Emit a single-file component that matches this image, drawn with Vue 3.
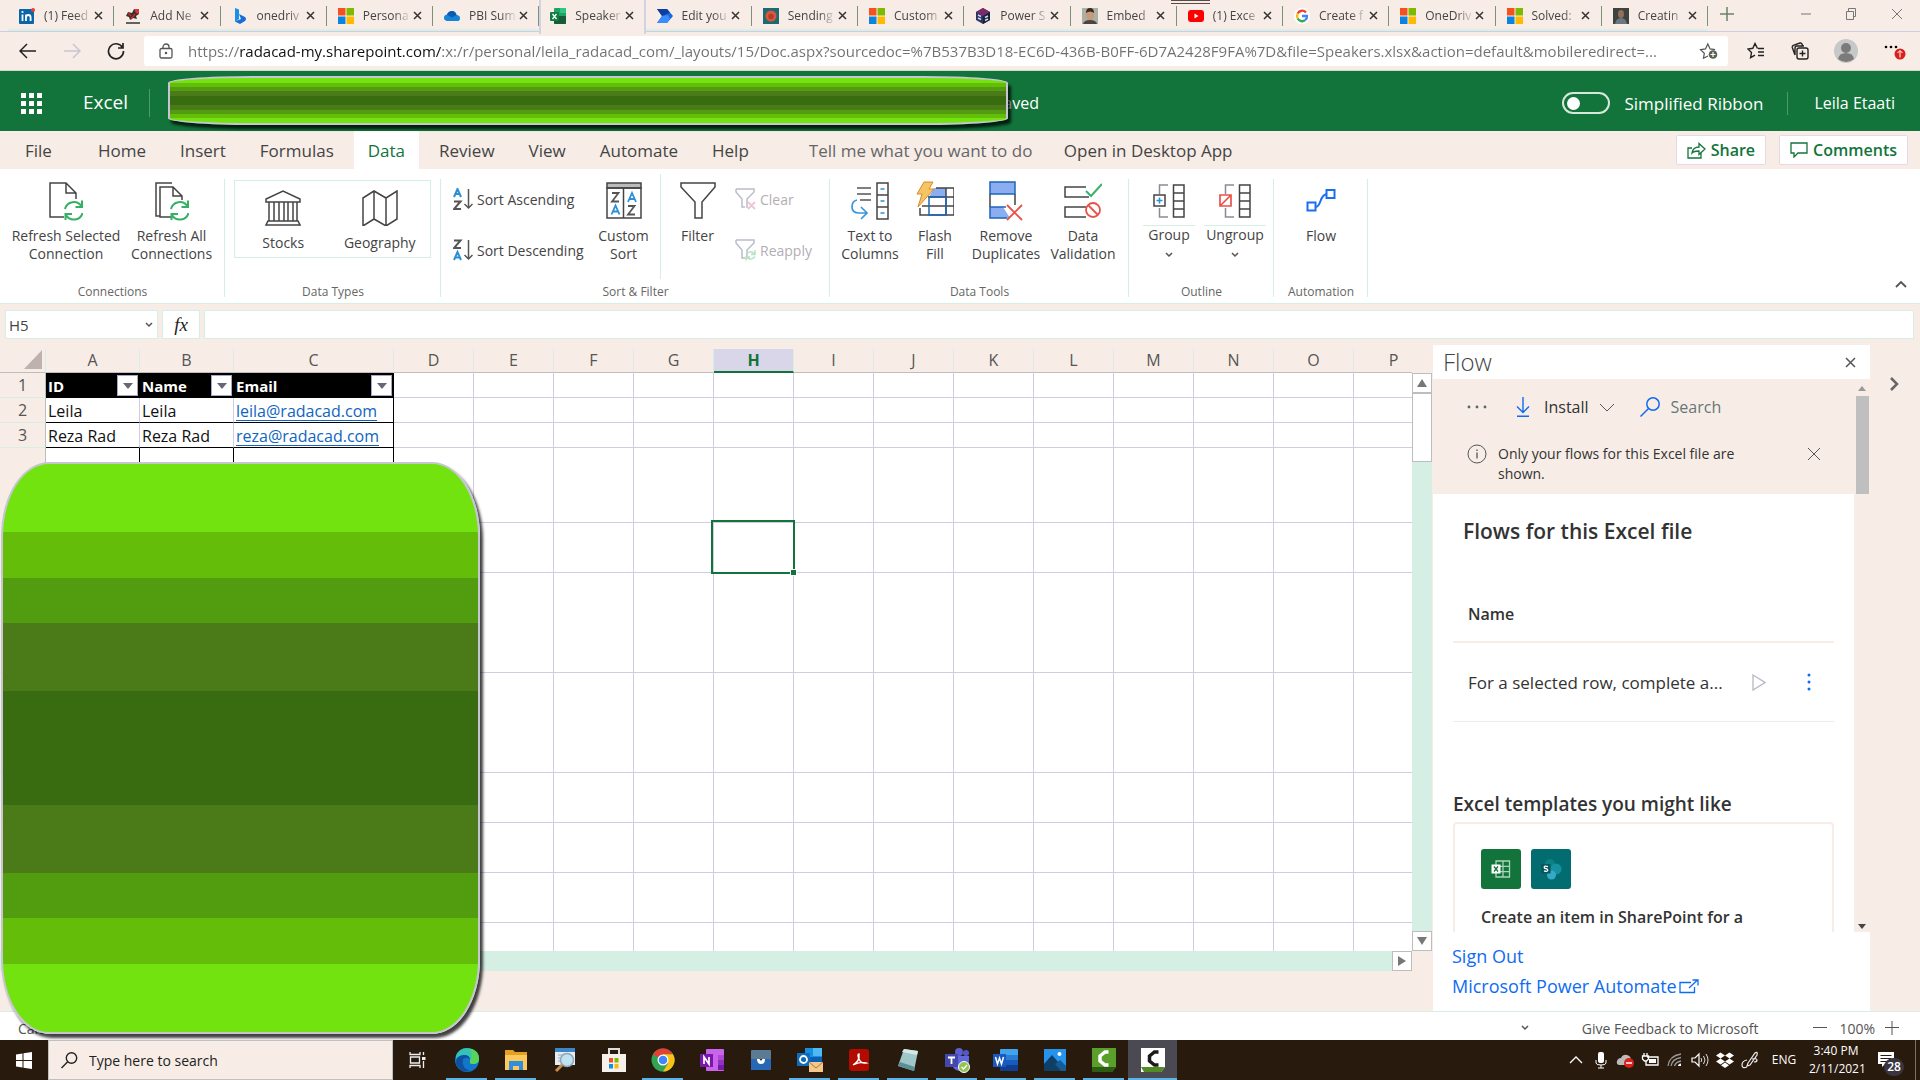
<template>
  <div class="screen">
    <!-- Browser tabs -->
    <div class="tab-strip">
      <div class="tabs">
        <div v-for="tab in tabs" :key="tab.title" class="tab" :class="{ active: tab.active }">
          <svg class="favicon" viewBox="0 0 16 16" v-html="favicons[tab.icon]"></svg>
          <span class="tab-title">{{ tab.title }}</span>
          <button class="tab-close" :aria-label="'Close ' + tab.title">
            <svg width="9" height="9" viewBox="0 0 9 9"><path d="M1 1l7 7M8 1l-7 7" stroke="#333" stroke-width="1.5" /></svg>
          </button>
        </div>
      </div>
      <div class="share-handle"></div>
      <div class="window-controls">
        <button aria-label="New tab"><svg width="14" height="14" viewBox="0 0 14 14"><path d="M7 0v14M0 7h14" stroke="#6b8068" stroke-width="1.5" /></svg></button>
        <span class="spacer"></span>
        <button aria-label="Minimize"><svg width="10" height="12" viewBox="0 0 10 12"><path d="M0 6h10" stroke="#777" /></svg></button>
        <button aria-label="Restore"><svg width="12" height="12" viewBox="0 0 12 12" fill="none" stroke="#777"><path d="M1.500 3.500h7v8h-7zM3.500 3V.5h7v8H9" /></svg></button>
        <button aria-label="Close window"><svg width="12" height="12" viewBox="0 0 12 12"><path d="M1 1l10 10M11 1L1 11" stroke="#777" /></svg></button>
      </div>
    </div>

    <!-- Address bar -->
    <div class="toolbar">
      <div class="nav-buttons">
        <button aria-label="Back"><svg width="18" height="16" viewBox="0 0 18 16" fill="none" stroke="#222" stroke-width="1.500"><path d="M17 8H1M8 1L1 8l7 7" /></svg></button>
        <button aria-label="Forward"><svg width="18" height="16" viewBox="0 0 18 16" fill="none" stroke="#c9c5d2" stroke-width="1.500"><path d="M1 8h16M10 1l7 7-7 7" /></svg></button>
        <button aria-label="Refresh"><svg width="18" height="18" viewBox="0 0 18 18" fill="none" stroke="#222" stroke-width="1.700"><path d="M15.500 5.500A7.500 7.500 0 1 0 16.500 9M16 1v5h-5" /></svg></button>
      </div>
      <div class="address">
        <svg width="14" height="16" viewBox="0 0 14 16" fill="none" stroke="#555" stroke-width="1.300"><rect x="1" y="5.500" width="12" height="9.500" rx="1.500" /><path d="M4 5.500V4a3 3 0 0 1 6 0v1.500" /><circle cx="7" cy="10" r=".6" fill="#555" /></svg>
        <input v-model="url" class="url" type="text" aria-label="Address" />
        <button aria-label="Add to favorites"><svg width="19" height="18" viewBox="0 0 19 18" fill="none" stroke="#555" stroke-width="1.200"><path d="M9 14l-4.500 2.300.8-5L1.500 7.700l5-.8L8.800 2l2.300 4.900 5 .8" /><circle cx="14" cy="12.500" r="4.300" fill="#56614f" stroke="none" /><path d="M14 10v5M11.500 12.500h5" stroke="#fff" /></svg></button>
      </div>
      <div class="toolbar-actions">
        <button aria-label="Favorites"><svg width="18" height="18" viewBox="0 0 18 18" fill="none" stroke="#222" stroke-width="1.400"><path d="M10.500 6.500L8 1.500 5.800 6.300.9 7l3.600 3.500-.9 5.200L8 13.200M11 6.500h6M11 10h6M11 13.500h6" /></svg></button>
        <button aria-label="Collections"><svg width="18" height="18" viewBox="0 0 18 18" fill="none" stroke="#222" stroke-width="1.400"><rect x="6" y="6" width="11" height="11" rx="2" /><path d="M11.500 8.500v6M8.500 11.500h6M4 13L1.300 5.500Q1 4 2.300 3.300L9 1q1.500-.3 2 1l.5 1.500M4 13V6q0-2 2-2h7" /></svg></button>
        <button aria-label="Profile"><svg width="24" height="24" viewBox="0 0 24 24"><circle cx="12" cy="12" r="12" fill="#c6c9c8" /><circle cx="12" cy="9" r="5" fill="#7b7b7b" /><path d="M4 20q1-6 8-6t8 6q-8 6-16 0z" fill="#7b7b7b" /></svg></button>
        <button aria-label="Settings and more"><svg width="22" height="20" viewBox="0 0 22 20"><circle cx="2" cy="6" r="1.300" /><circle cx="7" cy="6" r="1.300" /><circle cx="12" cy="6" r="1.300" /><circle cx="16" cy="13" r="5.500" fill="#d9201d" /><path d="M16 16.500v-6.500M13.500 12l2.500-2.500 2.500 2.500" stroke="#fff" fill="none" /></svg></button>
      </div>
    </div>

    <!-- Excel header -->
    <header class="app-header">
      <button class="waffle" aria-label="App launcher"><i v-for="n in 9" :key="n"></i></button>
      <span class="app-name">Excel</span>
      <div class="document">
        <span class="saved">Saved</span>
        <div class="cover cover-title"></div>
      </div>
      <label class="ribbon-toggle">
        <input type="checkbox" />
        <span>Simplified Ribbon</span>
      </label>
      <span class="user">Leila Etaati</span>
    </header>

    <!-- Ribbon tabs -->
    <nav class="menu">
      <button v-for="item in menu" :key="item" :class="{ active: item === 'Data', file: item === 'File' }">{{ item }}</button>
      <input class="tell-me" type="text" placeholder="Tell me what you want to do" aria-label="Tell me what you want to do" />
      <button>Open in Desktop App</button>
      <span class="spacer"></span>
      <button class="outlined"><svg width="19" height="18" viewBox="0 0 19 18" fill="none" stroke="#12743b" stroke-width="1.300"><path d="M5 7H1v10h13v-5M5 12q1-6 7-6V2.500L18 8l-6 5.500V10q-5 0-7 2z" /></svg>Share</button>
      <button class="outlined"><svg width="18" height="16" viewBox="0 0 18 16" fill="none" stroke="#12743b" stroke-width="1.300"><path d="M1 1h16v10H8l-4 4v-4H1z" /></svg>Comments</button>
    </nav>

    <!-- Ribbon -->
    <section class="ribbon">
      <div class="group connections">
        <div class="group-body">
          <button class="big w-selected"><svg class="ico" width="34" height="38" viewBox="0 0 34 38" v-html="icons.refreshOne"></svg><span>Refresh Selected<br />Connection</span></button>
          <button class="big w-all"><svg class="ico" width="34" height="38" viewBox="0 0 34 38" v-html="icons.refreshAll"></svg><span>Refresh All<br />Connections</span></button>
        </div>
        <div class="group-name">Connections</div>
      </div>
      <div class="group data-types">
        <div class="group-body">
          <div class="gallery">
            <button><svg width="36" height="36" viewBox="0 0 36 36" v-html="icons.stocks"></svg><span>Stocks</span></button>
            <button><svg width="36" height="36" viewBox="0 0 36 36" v-html="icons.geography"></svg><span>Geography</span></button>
          </div>
        </div>
        <div class="group-name">Data Types</div>
      </div>
      <div class="group sort-filter">
        <div class="group-body">
          <div class="stack w-sort">
            <button><svg width="20" height="22" viewBox="0 0 20 22" v-html="icons.sortAsc"></svg>Sort Ascending</button>
            <button><svg width="20" height="22" viewBox="0 0 20 22" v-html="icons.sortDesc"></svg>Sort Descending</button>
          </div>
          <button class="big w-custom"><svg class="ico" width="36" height="38" viewBox="0 0 36 38" v-html="icons.customSort"></svg><span>Custom<br />Sort</span></button>
          <div class="divider"></div>
          <button class="big w-filter"><svg class="ico" width="36" height="38" viewBox="0 0 36 38" v-html="icons.filter"></svg><span>Filter</span></button>
          <div class="stack muted">
            <button disabled><svg width="21" height="22" viewBox="0 0 21 22" v-html="icons.clear"></svg>Clear</button>
            <button disabled><svg width="21" height="22" viewBox="0 0 21 22" v-html="icons.reapply"></svg>Reapply</button>
          </div>
        </div>
        <div class="group-name">Sort &amp; Filter</div>
      </div>
      <div class="group data-tools">
        <div class="group-body">
          <button class="big w-columns"><svg class="ico" width="38" height="38" viewBox="0 0 38 38" v-html="icons.textColumns"></svg><span>Text to<br />Columns</span></button>
          <button class="big w-flash"><svg class="ico" width="38" height="38" viewBox="0 0 38 38" v-html="icons.flashFill"></svg><span>Flash<br />Fill</span></button>
          <button class="big w-remove"><svg class="ico" width="34" height="40" viewBox="0 0 34 40" v-html="icons.duplicates"></svg><span>Remove<br />Duplicates</span></button>
          <button class="big w-valid"><svg class="ico" width="38" height="38" viewBox="0 0 38 38" v-html="icons.validation"></svg><span>Data<br />Validation</span></button>
        </div>
        <div class="group-name">Data Tools</div>
      </div>
      <div class="group outline">
        <div class="group-body">
          <button class="big split"><svg class="ico" width="32" height="36" viewBox="0 0 32 36" v-html="icons.group"></svg><span>Group</span><svg class="caret" width="8" height="6" viewBox="0 0 8 6"><path d="M1 1l3 3 3-3" fill="none" stroke="#555" stroke-width="1.500" /></svg></button>
          <button class="big split"><svg class="ico" width="32" height="36" viewBox="0 0 32 36" v-html="icons.ungroup"></svg><span>Ungroup</span><svg class="caret" width="8" height="6" viewBox="0 0 8 6"><path d="M1 1l3 3 3-3" fill="none" stroke="#555" stroke-width="1.500" /></svg></button>
        </div>
        <div class="group-name">Outline</div>
      </div>
      <div class="group automation">
        <div class="group-body">
          <button class="big"><svg class="ico" width="30" height="38" viewBox="0 0 30 38" v-html="icons.flow"></svg><span>Flow</span></button>
        </div>
        <div class="group-name">Automation</div>
      </div>
      <button class="collapse" aria-label="Collapse ribbon"><svg width="12" height="8" viewBox="0 0 12 8"><path d="M1 7l5-5 5 5" fill="none" stroke="#555" stroke-width="1.800" /></svg></button>
    </section>

    <!-- Formula bar -->
    <div class="formula-bar">
      <div class="name-box">
        <input type="text" value="H5" aria-label="Name box" />
        <button aria-label="Show names"><svg width="8" height="6" viewBox="0 0 8 6"><path d="M1 1l3 3 3-3" fill="none" stroke="#555" stroke-width="1.500" /></svg></button>
      </div>
      <button class="fx" aria-label="Insert function">fx</button>
      <input class="formula" type="text" aria-label="Formula" />
    </div>

    <!-- Sheet and side pane -->
    <main class="workspace">
      <div class="sheet">
        <div class="sheet-row">
          <div class="grid-view">
            <table class="grid">
              <colgroup>
                <col class="c-head" /><col class="c-ab" /><col class="c-ab" /><col class="c-c" />
                <col v-for="n in 13" :key="n" class="c-std" />
              </colgroup>
              <thead>
                <tr>
                  <th class="corner"><svg width="18" height="19" viewBox="0 0 18 19"><path d="M18 0v19H0z" fill="#bfb1b0" /></svg></th>
                  <th v-for="col in columns" :key="col" :class="{ selected: col === 'H' }">{{ col }}</th>
                </tr>
              </thead>
              <tbody>
                <tr v-for="(row, r) in rows" :key="r" :class="row.kind">
                  <th>{{ row.label }}</th>
                  <td v-for="(col, c) in columns" :key="col" :class="{ inside: c < 3, active: r === 4 && col === 'H' }">
                    <div v-if="row.kind === 'r-title' && c < 3" class="title-cell">
                      {{ row.cells[c] }}
                      <button :aria-label="'Filter ' + row.cells[c]"><svg width="10" height="6" viewBox="0 0 10 6"><path d="M0 0h10L5 6z" fill="#667" /></svg></button>
                    </div>
                    <a v-else-if="row.cells && c === 2" :href="'mailto:' + row.cells[c]">{{ row.cells[c] }}</a>
                    <template v-else-if="row.cells">{{ row.cells[c] }}</template>
                  </td>
                </tr>
              </tbody>
            </table>
          </div>
          <div class="v-scroll">
            <button aria-label="Scroll up"><svg width="10" height="8" viewBox="0 0 10 8"><path d="M5 0l5 8H0z" fill="#777" /></svg></button>
            <div class="v-thumb"></div>
            <span class="spacer"></span>
            <button aria-label="Scroll down"><svg width="10" height="8" viewBox="0 0 10 8"><path d="M5 8l5-8H0z" fill="#777" /></svg></button>
          </div>
        </div>
        <div class="h-scroll">
          <span class="spacer"></span>
          <button aria-label="Scroll right"><svg width="8" height="10" viewBox="0 0 8 10"><path d="M8 5L0 10V0z" fill="#777" /></svg></button>
        </div>
        <div class="sheet-tabs"></div>
        <div class="cover cover-sheet"></div>
      </div>

      <aside class="pane">
        <div class="pane-head">
          <h2>Flow</h2>
          <button aria-label="Close pane"><svg width="11" height="11" viewBox="0 0 11 11"><path d="M1 1l9 9M10 1l-9 9" stroke="#555" stroke-width="1.500" /></svg></button>
        </div>
        <div class="pane-view">
          <div class="pane-content">
            <div class="commands">
              <button class="more" aria-label="More"><svg width="20" height="4" viewBox="0 0 20 4" fill="#566"><circle cx="2" cy="2" r="1.400" /><circle cx="10" cy="2" r="1.400" /><circle cx="18" cy="2" r="1.400" /></svg></button>
              <button class="install"><svg width="14" height="20" viewBox="0 0 14 20" fill="none" stroke="#0f6cf2" stroke-width="1.400"><path d="M7 0v15M1 9.500l6 6 6-6M1 19.300h12" /></svg>Install<svg width="16" height="9" viewBox="0 0 16 9"><path d="M1 1l7 7 7-7" fill="none" stroke="#555" /></svg></button>
              <label class="pane-search">
                <svg width="20" height="20" viewBox="0 0 20 20" fill="none" stroke="#0f6cf2" stroke-width="1.500"><circle cx="13" cy="7" r="6.200" /><path d="M8.500 11.500L.5 19.500" /></svg>
                <input type="text" placeholder="Search" aria-label="Search flows" />
              </label>
            </div>
            <div class="notice">
              <svg width="20" height="20" viewBox="0 0 20 20" fill="none" stroke="#555"><circle cx="10" cy="10" r="9" /><path d="M10 8.500v6M10 5.500v1.500" stroke-width="1.300" /></svg>
              <p>Only your flows for this Excel file are shown.</p>
              <button aria-label="Dismiss"><svg width="14" height="14" viewBox="0 0 14 14"><path d="M1 1l12 12M13 1L1 13" stroke="#555" /></svg></button>
            </div>
            <h3 class="flows-title">Flows for this Excel file</h3>
            <div class="flow-head">Name</div>
            <div class="flow-row">
              <span>For a selected row, complete a...</span>
              <button aria-label="Run"><svg width="14" height="17" viewBox="0 0 14 17"><path d="M1 1l12 7.500L1 16z" fill="none" stroke="#b9b6c4" stroke-width="1.300" /></svg></button>
              <button aria-label="Flow options"><svg width="4" height="18" viewBox="0 0 4 18" fill="#0f6cf2"><circle cx="2" cy="2" r="1.500" /><circle cx="2" cy="9" r="1.500" /><circle cx="2" cy="16" r="1.500" /></svg></button>
            </div>
            <h3 class="templates-title">Excel templates you might like</h3>
            <div class="template">
              <div class="template-icons">
                <svg width="40" height="40" viewBox="0 0 40 40"><rect width="40" height="40" rx="3" fill="#12743b" /><path d="M15 12h13.500v16H15zM15 17.300h13.500M15 22.600h13.500M22 12v16" fill="none" stroke="#a9d5ba" stroke-width="1.300" /><rect x="10.500" y="15.500" width="9" height="9" fill="#fff" /><path d="M13 17.500l4 5M17 17.500l-4 5" stroke="#12743b" stroke-width="1.300" /></svg>
                <svg width="40" height="40" viewBox="0 0 40 40"><rect width="40" height="40" rx="3" fill="#036c70" /><circle cx="19" cy="15" r="5" fill="#0a8286" /><circle cx="25" cy="20" r="5.500" fill="#1691a0" /><circle cx="20.500" cy="26" r="4.500" fill="#37a9c6" /><rect x="10" y="15" width="9.500" height="9.500" fill="#05585d" /><path d="M17 17.700q-3.800-1.500-3.800.7 0 .8 1.800 1.300t1.800 1.500q-.3 1.900-3.800.6" fill="none" stroke="#fff" stroke-width="1.300" /></svg>
              </div>
              <div class="template-name">Create an item in SharePoint for a</div>
            </div>
          </div>
          <div class="pane-scroll">
            <svg width="8" height="5" viewBox="0 0 8 5"><path d="M4 0l4 5H0z" fill="#999" /></svg>
            <div class="pane-thumb"></div>
            <span class="spacer"></span>
            <svg width="8" height="5" viewBox="0 0 8 5"><path d="M4 5l4-5H0z" fill="#444" /></svg>
          </div>
        </div>
        <div class="pane-foot">
          <a href="#signout">Sign Out</a>
          <a href="#automate">Microsoft Power Automate <svg width="20" height="15" viewBox="0 0 20 15" fill="none" stroke="#0f6cf2" stroke-width="1.300"><path d="M12 3.500H1v10h14.500V8M10 9l8.500-8M13.500 1H19v5.500" /></svg></a>
        </div>
      </aside>
      <div class="rail">
        <button aria-label="Expand"><svg width="9" height="14" viewBox="0 0 9 14"><path d="M1 1l6 6-6 6" fill="none" stroke="#666" stroke-width="2.500" /></svg></button>
      </div>
    </main>

    <!-- Status bar -->
    <footer class="status">
      <span>Calc</span>
      <span class="spacer"></span>
      <svg class="status-caret" width="8" height="6" viewBox="0 0 8 6"><path d="M1 1l3 3 3-3" fill="none" stroke="#555" stroke-width="1.500" /></svg>
      <a href="#feedback">Give Feedback to Microsoft</a>
      <button aria-label="Zoom out"><svg width="14" height="14" viewBox="0 0 14 14"><path d="M0 6.500h14" stroke="#555" /></svg></button>
      <span>100%</span>
      <button aria-label="Zoom in"><svg width="14" height="14" viewBox="0 0 14 14"><path d="M0 6.500h14M7 0v14" stroke="#555" /></svg></button>
    </footer>

    <!-- Windows taskbar -->
    <div class="taskbar">
      <button class="start" aria-label="Start"><svg width="16" height="17" viewBox="0 0 16 17" fill="#fff"><path d="M0 2.500l6.500-1V8H0zM7.500 1.300L16 0v8H7.500zM0 9h6.500v6.500l-6.500-1zM7.500 9H16v8l-8.500-1.300z" /></svg></button>
      <label class="task-search">
        <svg width="17" height="17" viewBox="0 0 17 17" fill="none" stroke="#222" stroke-width="1.400"><circle cx="10.500" cy="6" r="5.200" /><path d="M6.700 9.700L.5 16" /></svg>
        <input type="text" placeholder="Type here to search" aria-label="Type here to search" />
      </label>
      <button v-for="app in apps" :key="app.name" class="app" :class="{ running: app.running, current: app.current }" :aria-label="app.name">
        <svg width="26" height="26" viewBox="0 0 26 26" v-html="app.icon"></svg>
      </button>
      <span class="spacer"></span>
      <div class="tray">
        <svg v-for="(icon, i) in tray" :key="i" width="18" height="18" viewBox="0 0 18 18" v-html="icon"></svg>
      </div>
      <span class="lang">ENG</span>
      <div class="clock"><span>3:40 PM</span><span>2/11/2021</span></div>
      <button class="notifications" aria-label="Notifications">
        <svg width="16" height="15" viewBox="0 0 16 15"><path d="M0 0h16v12H7l-3 3v-3H0z" fill="#fff" /><path d="M2.500 3.500h11M2.500 6.500h11M2.500 9.500h6" stroke="#281a0d" /></svg>
        <span class="badge">28</span>
      </button>
    </div>
  </div>
</template>

<script setup>
import { ref } from 'vue'

const url = ref('https://radacad-my.sharepoint.com/:x:/r/personal/leila_radacad_com/_layouts/15/Doc.aspx?sourcedoc=%7B537B3D18-EC6D-436B-B0FF-6D7A2428F9FA%7D&file=Speakers.xlsx&action=default&mobileredirect=...')

const tabs = [
  { title: '(1) Feed', icon: 'linkedin' },
  { title: 'Add Ne', icon: 'radacad' },
  { title: 'onedriv', icon: 'bing' },
  { title: 'Persona', icon: 'microsoft' },
  { title: 'PBI Sum', icon: 'onedrive' },
  { title: 'Speaker', icon: 'excel', active: true },
  { title: 'Edit you', icon: 'automate' },
  { title: 'Sending', icon: 'lion' },
  { title: 'Custom', icon: 'microsoft' },
  { title: 'Power S', icon: 'cube' },
  { title: 'Embed', icon: 'person' },
  { title: '(1) Exce', icon: 'youtube' },
  { title: 'Create f', icon: 'google' },
  { title: 'OneDriv', icon: 'microsoft' },
  { title: 'Solved:', icon: 'microsoft' },
  { title: 'Creatin', icon: 'photo' }
]

const favicons = {
  linkedin: '<rect x="0" y="1" width="15" height="15" rx="1" fill="#0a66a8"/><path d="M3.500 6.500v6.500M7 13V6.500M7 9.500q0-2.500 2.300-2.500t2.300 2.500V13" stroke="#fff" stroke-width="1.800" fill="none"/><circle cx="3.500" cy="4" r="1.100" fill="#fff"/><circle cx="14" cy="2" r="2" fill="#e8402a"/>',
  radacad: '<path d="M3 4l4 1 2-4h5v5l-3 2 1 3-4-1-3 2-1-3-3-1z" fill="#333"/><path d="M9 1h5v5l-3-1z" fill="#d93636"/><path d="M3 5l3 3M6 11l4-5" stroke="#d22" stroke-width="1.500"/><path d="M1 15h14" stroke="#333" stroke-width="1.500"/>',
  bing: '<path d="M3 0l4 1.500V11l-4 3z" fill="#1a8fe8"/><path d="M7 6l6 3q2 2 0 4l-5 3-5-2.500 6-2.500z" fill="#1470d8"/>',
  microsoft: '<path d="M0 0h7.500v7.500H0z" fill="#f4511e"/><path d="M8.500 0H16v7.500H8.500z" fill="#7fba00"/><path d="M0 8.500h7.500V16H0z" fill="#0a84e0"/><path d="M8.500 8.500H16V16H8.500z" fill="#ffb900"/>',
  onedrive: '<path d="M3 13q-3-.5-3-3.200T3 6.500Q4.500 3 8 3t4.500 4q3.500.2 3.500 3.200T13 13z" fill="#1583d8"/><path d="M3 6.500Q4.500 3 8 3t4.500 4L8 9.500z" fill="#0a5cb0"/>',
  excel: '<rect x="4" y="0" width="12" height="16" rx="1" fill="#21a366"/><path d="M4 8h12v7q0 1-1 1H5q-1 0-1-1z" fill="#185c37"/><path d="M10 0h5q1 0 1 1v4h-6z" fill="#33c481"/><rect x="0" y="4" width="9" height="9" rx="1" fill="#107c41"/><path d="M2.500 6l4 5M6.500 6l-4 5" stroke="#fff" stroke-width="1.300"/>',
  automate: '<path d="M0 1h10l6 7-6 7H0l5-7z" fill="#1a66e0"/><path d="M0 1h10l3 3.500-8 3.500z" fill="#0c3f9e"/><path d="M5 8l6-1 2 4-3 4H0z" fill="#3a8cff"/>',
  lion: '<rect width="16" height="16" fill="#1f6a70"/><circle cx="8" cy="8" r="5.500" fill="#d9573b"/><circle cx="8" cy="8.500" r="2.800" fill="#b83b2b"/>',
  cube: '<path d="M8 0l7 4v8l-7 4-7-4V4z" fill="#2d3566"/><path d="M8 0l7 4-7 4-7-4z" fill="#7d2a68"/><path d="M8 8l7-4v8l-7 4z" fill="#18223f"/><path d="M3 7l3 1.500M3 10l3 1.500M10 9.500l3-1.500M10 12.500l3-1.500" stroke="#cfd8e8" stroke-width="1.500"/>',
  person: '<rect width="16" height="16" fill="#aab0a4"/><ellipse cx="8" cy="7" rx="4" ry="5.500" fill="#c79a7c"/><path d="M4 5q0-5 4-5t4 5q-4-3-8 0z" fill="#3a2a22"/><path d="M1 16q1-4 7-4t7 4z" fill="#4c4440"/>',
  youtube: '<rect x="0" y="2" width="16" height="12" rx="3" fill="#f00"/><path d="M6.500 5.500v5l4-2.500z" fill="#fff"/>',
  google: '<circle cx="8" cy="8" r="8" fill="#fff"/><path d="M12 4.500A5 5 0 0 0 3.700 5.500" stroke="#ea4335" stroke-width="2.300" fill="none"/><path d="M3.700 5.500a5 5 0 0 0 0 5" stroke="#fbbc05" stroke-width="2.300" fill="none"/><path d="M3.700 10.500a5 5 0 0 0 7.500 1.700" stroke="#34a853" stroke-width="2.300" fill="none"/><path d="M11.200 12.200A5 5 0 0 0 13 8H8" stroke="#4285f4" stroke-width="2.300" fill="none"/>',
  photo: '<rect width="16" height="16" fill="#3d4440"/><ellipse cx="8" cy="6" rx="3" ry="4" fill="#93705c"/><path d="M2 16q1-6 6-6t6 6z" fill="#6c7880"/>'
}

const menu = ['File', 'Home', 'Insert', 'Formulas', 'Data', 'Review', 'View', 'Automate', 'Help']

const columns = 'ABCDEFGHIJKLMNOP'.split('')

const rows = [
  { kind: 'r-title', label: 1, cells: ['ID', 'Name', 'Email'] },
  { kind: 'r-data', label: 2, cells: ['Leila', 'Leila', 'leila@radacad.com'] },
  { kind: 'r-data', label: 3, cells: ['Reza Rad', 'Reza Rad', 'reza@radacad.com'] },
  { kind: 'r-tail' },
  { kind: 'r-mid' },
  { kind: 'r-tall' },
  { kind: 'r-tall' },
  { kind: 'r-mid' },
  { kind: 'r-mid' },
  { kind: 'r-mid' },
  { kind: 'r-mid' }
]

const arrows = '<path d="M16 27a9 9 0 0 1 16.500-2.500M33 18.500v6.500h-6.500M33.500 31a9 9 0 0 1-16.500 2M16.500 38v-6H23" fill="none" stroke="#35b065" stroke-width="2"/>'
const outlineBars = '<path d="M20.500 2H31v32H20.500zM20.500 10H31M20.500 18H31M20.500 26H31" fill="none" stroke="#444" stroke-width="1.500"/><path d="M15 2H6.500v9M6.500 25v9H15" fill="none" stroke="#8a8a96" stroke-width="1.500"/>'
const smallFunnel = '<path d="M1 1h18v3l-7 7v9M1 1v3l6 7v8h3" fill="none" stroke="#bcbccb" stroke-width="1.500"/>'

// Inner markup of the ribbon icons
const icons = {
  refreshOne: '<path d="M15 35H1V1h16l10 10v6M17 1v10h10" fill="none" stroke="#444" stroke-width="1.500"/>' + arrows,
  refreshAll: '<path d="M5 34H1V1h16M17 35H5V5h13l9 9v4M18 5v9h9" fill="none" stroke="#444" stroke-width="1.500"/>' + arrows,
  stocks: '<path d="M1 12V9L18 1l17 8v3zM4 12v19M32 12v19M9 12v19M14 12v19M19 12v19M23 12v19M28 12v19M3 31h30l2 4H1z" fill="none" stroke="#444" stroke-width="1.500"/>',
  geography: '<path d="M1 8l11-7 12 7 11-7v28l-11 7-12-7-11 7zM12 1v28M24 8v28" fill="none" stroke="#444" stroke-width="1.500"/>',
  sortAsc: '<path d="M1 9l3.500-8L8 9M2.500 6h4" fill="none" stroke="#2b8fd8" stroke-width="2"/><path d="M1 13.500h6.500L1 21h7" fill="none" stroke="#555" stroke-width="2"/><path d="M15.500 1v19M11.500 16l4 4 4-4" fill="none" stroke="#555" stroke-width="1.500"/>',
  sortDesc: '<path d="M1 1.500h6.500L1 9h7" fill="none" stroke="#555" stroke-width="2"/><path d="M1 21l3.500-8L8 21M2.500 18.500h4" fill="none" stroke="#2b8fd8" stroke-width="2"/><path d="M15.500 1v19M11.500 16l4 4 4-4" fill="none" stroke="#555" stroke-width="1.500"/>',
  customSort: '<path d="M1 1h34v5H1z" fill="#bbb" stroke="#444" stroke-width="1.500"/><path d="M1 6h34v30H1zM17.500 6v30" fill="none" stroke="#444" stroke-width="1.500"/><path d="M6 11h6.500L6 19.500h7M22 24h6.500L22 32.500h7" fill="none" stroke="#555" stroke-width="1.800"/><path d="M5.500 32.500l4-9 4 9M7 29.500h5M22 20l4-9 4 9M23.500 17h5" fill="none" stroke="#2b8fd8" stroke-width="1.800"/>',
  filter: '<path d="M1 1h34v4L22 20v16h-7V20L1 5z" fill="none" stroke="#444" stroke-width="1.500"/>',
  clear: smallFunnel + '<path d="M13 14l7 7M20 14l-7 7" stroke="#ecc5d6" stroke-width="1.800"/>',
  reapply: smallFunnel + '<path d="M11 15.500q4-5 8.500-.5M20 11v4.500h-4M20 17.500q-4 5-8.500.5M11 21.500V18h4" fill="none" stroke="#b4e2c0" stroke-width="1.500"/>',
  textColumns: '<path d="M26 1h11v36H26zM26 13h11M26 25h11" fill="none" stroke="#444" stroke-width="1.500"/><path d="M6 6h14M6 12h14M9 18h11" stroke="#555" stroke-width="1.500"/><path d="M6 18q-5 1-5 7t7 6h7M10 25l6 6-6 6" fill="none" stroke="#3b97dc" stroke-width="1.700"/><path d="M29.500 7h4M29.500 19h4M29.500 31h4" stroke="#2b8fd8" stroke-width="1.500"/>',
  flashFill: '<path d="M18 6h12v9H13z" fill="#8aaef0"/><path d="M4 26v7h34V6H20M12 15h26M6 24h32M30 6v27M4 33" fill="none" stroke="#444" stroke-width="1.500"/><path d="M13 15h17v18H13z" fill="none" stroke="#1f66b8" stroke-width="1.500"/><path d="M8 0h9l-4 7h5L2 25l4-13H1z" fill="#f5c463" stroke="#d98a2b"/>',
  duplicates: '<path d="M1 1h25v12H1zM1 26h13l7 11H1z" fill="#8aaef0"/><path d="M1 13v13M26 13v11" stroke="#444" stroke-width="1.500"/><path d="M1 1h25v12H1zM17 26H1v11h17" fill="none" stroke="#1f66b8" stroke-width="1.500"/><path d="M18 24l15 15M33 24L18 39" stroke="#e8524a" stroke-width="1.800"/>',
  validation: '<path d="M22 5H1v10h24M22 25H1v10h21" fill="none" stroke="#444" stroke-width="1.500"/><path d="M22 9l5 5L38 2" fill="none" stroke="#3bb26b" stroke-width="2"/><circle cx="29" cy="28" r="7" fill="#fff" stroke="#e8524a" stroke-width="1.800"/><path d="M24 23l10 10" stroke="#e8524a" stroke-width="1.800"/>',
  group: outlineBars + '<path d="M1 12h11v11H1z" fill="#fff" stroke="#444" stroke-width="1.500"/><path d="M6.500 14.500v6M3.500 17.500h6" stroke="#2b8fd8" stroke-width="1.500"/>',
  ungroup: outlineBars + '<path d="M1 12h11v11H1zM1 23l11-11" fill="#fff" stroke="#e8524a" stroke-width="1.700"/>',
  flow: '<path d="M1.500 20.500h8v8h-8zM20.500 8h8v8h-8z" fill="none" stroke="#1a6ff0" stroke-width="2"/><path d="M9.500 25q3 0 5-6t6-7" fill="none" stroke="#1a6ff0" stroke-width="2"/>'
}

const apps = [
  { name: 'Task View', icon: '<path d="M5 5v2.500h10V5M5 21v-2.500h10V21M5.500 10h9v6h-9zM18.500 5v3M18.500 14v7" fill="none" stroke="#eee" stroke-width="1.300"/><rect x="17" y="10" width="3.500" height="3" fill="#eee"/>' },
  { name: 'Edge', running: true, icon: '<circle cx="13" cy="13" r="12" fill="#1276c9"/><path d="M2 9Q5 1 13 1q12 1 12 11 0 5-6 5-4 0-3-3 0-6-6-6-5 0-8 4z" fill="#35c1b5"/><path d="M15 1.500Q25 3 25 12q0 5-6 5-4 0-3-3 4-7-1-12.500z" fill="#58d45a"/><path d="M9 12q-2 9 7 12-10 2-14-7-1-8 8-9 6 0 6 5-2-4-7-1z" fill="#0d51a0"/>' },
  { name: 'File Explorer', running: true, icon: '<path d="M2 3h8l2 2h12v18H2z" fill="#e5a023"/><path d="M2 8h22v15H2z" fill="#fbc95c"/><path d="M6 14h14v9h-4v-4h-6v4H6z" fill="#2f8edd"/>' },
  { name: 'Event Viewer', icon: '<path d="M3 1h20v17H3z" fill="#e6edf2"/><path d="M3 1h20v4H3z" fill="#3c85c6"/><path d="M6 8h12M6 11h10M6 14h8" stroke="#9ab"/><circle cx="15" cy="13" r="6.500" fill="#bfe3f2" stroke="#8fa7b4" stroke-width="1.500"/><path d="M10 18l-6 6" stroke="#c98a4e" stroke-width="3"/>' },
  { name: 'Store', icon: '<path d="M8 7V2h10v5" fill="none" stroke="#ddd" stroke-width="2"/><path d="M1 7h24v18H1z" fill="#f6f0ec"/><path d="M8 11h4v4.500H8z" fill="#f2502b"/><path d="M13.500 11h4v4.500h-4z" fill="#7fba00"/><path d="M8 17h4v4.500H8z" fill="#0a94e8"/><path d="M13.500 17h4v4.500h-4z" fill="#ffb900"/>' },
  { name: 'Chrome', running: true, icon: '<circle cx="13" cy="13" r="11.500" fill="#32a350"/><path d="M13 13L3 7.200A11.500 11.500 0 0 1 23 7.200H13z" fill="#e34133"/><path d="M13 13V7.200h10A11.500 11.500 0 0 1 13 24.500l5-8z" fill="#fbc116"/><circle cx="13" cy="13" r="5.500" fill="#fff"/><circle cx="13" cy="13" r="4.300" fill="#4285f4"/>' },
  { name: 'OneNote', icon: '<rect x="7" y="2" width="18" height="22" rx="1" fill="#ca64ea"/><path d="M19 8h6v5h-6z" fill="#ae4bd5"/><path d="M19 13h6v5h-6z" fill="#9332bf"/><path d="M19 18h6v5h-6z" fill="#7719aa"/><rect x="1" y="7" width="13" height="13" fill="#7719aa"/><path d="M5 17v-7l5 7v-7" fill="none" stroke="#fff" stroke-width="1.700"/>' },
  { name: 'Data Gateway', icon: '<rect x="3" y="3" width="20" height="20" rx="1" fill="#5b7a94"/><path d="M3 12h20v11H3z" fill="#2867b5"/><path d="M9 12h8q0 5-4 5t-4-5z" fill="#fff"/><path d="M11.500 12h3l-1.500 2z" fill="#234"/>' },
  { name: 'Outlook', running: true, icon: '<path d="M8 1h17v18H8z" fill="#1490df"/><path d="M16 1h9v8h-9z" fill="#50b8f2"/><path d="M8 10h17v9H8z" fill="#0a5fb0"/><rect x="0" y="6" width="13" height="13" fill="#0f6cbd"/><circle cx="6.500" cy="12.500" r="3.500" fill="none" stroke="#fff" stroke-width="1.800"/><path d="M12 15h14v10H12z" fill="#f3c88a"/><path d="M12 15l7 6 7-6" fill="none" stroke="#a9763a"/>' },
  { name: 'Acrobat', running: true, icon: '<rect x="3" y="2" width="20" height="22" rx="3" fill="#b30b00"/><path d="M7 18q7-4 6-11-2 0 0 5t7 4q-6-2-13 2z" fill="none" stroke="#fff" stroke-width="1.400"/>' },
  { name: 'Notepad', running: true, icon: '<path d="M9 2l14 2-4 20L3 19z" fill="#9fc7ca"/><path d="M9 2l14 2-1 4L7 5z" fill="#d5e8e6"/><path d="M3 19l16 5 1-4-15-5z" fill="#5b8f96"/>' },
  { name: 'Teams', running: true, icon: '<circle cx="15" cy="5" r="4" fill="#5b5fd0"/><circle cx="22" cy="6" r="3" fill="#5059c9"/><path d="M8 9h17v9q-1 6-8 6t-9-6z" fill="#6168dd"/><rect x="1" y="7" width="13" height="13" fill="#4248ad"/><path d="M4 10.500h7M7.500 10.500V17" stroke="#fff" stroke-width="1.800"/><circle cx="20" cy="20" r="5.500" fill="#92c353" stroke="#fff"/><path d="M17.500 20l2 2 3.500-4" fill="none" stroke="#fff" stroke-width="1.300"/>' },
  { name: 'Word', running: true, icon: '<rect x="7" y="2" width="18" height="22" rx="1" fill="#41a5ee"/><path d="M7 8h18v5H7z" fill="#2b7cd3"/><path d="M7 13h18v5H7z" fill="#185abd"/><path d="M7 18h18v6H7z" fill="#103f91"/><rect x="0" y="7" width="13" height="13" fill="#185abd"/><path d="M2.500 10l2 7 2-6 2 6 2-7" fill="none" stroke="#fff" stroke-width="1.500"/>' },
  { name: 'Photos', running: true, icon: '<rect x="2" y="2" width="22" height="22" fill="#2693ec"/><path d="M2 17l8-9 14 16H2z" fill="#0e3f66"/><path d="M13 17l5-4 6 6v5h-5z" fill="#175b92"/><circle cx="17.500" cy="7" r="2" fill="#fff"/>' },
  { name: 'Camtasia', running: true, icon: '<path d="M1 1h24v19l-4 5H1z" fill="#5a9e2c"/><path d="M1 20h24l-4 5H1z" fill="#2f5c14"/><path d="M17.500 5h-3.500l-5 4v5l5 4h3.500" fill="none" stroke="#fff" stroke-width="3.500"/>' },
  { name: 'Camtasia Recorder', running: true, current: true, icon: '<path d="M1 1h24v19l-4 5H1z" fill="#fff"/><path d="M1 20h24l-4 5H4z" fill="#4f8c24"/><path d="M18.500 5h-4l-5 4v5l5 4h4" fill="none" stroke="#1a1a1a" stroke-width="3.500"/>' }
]

const tray = [
  '<path d="M4 12l6-6 6 6" fill="none" stroke="#fff" stroke-width="1.300"/>',
  '<rect x="7" y="1" width="6" height="11" rx="2" fill="#fff"/><path d="M5 9v3q0 2 5 2t5-2V9M10 14v3M7 17h6" fill="none" stroke="#fff"/>',
  '<path d="M3 14q-3-1-2-4t4-3q2-4 6-3t4 5l-3 5z" fill="#bbb"/><circle cx="13" cy="12" r="5" fill="#d9201d"/><path d="M10 12h6" stroke="#fff" stroke-width="1.500"/>',
  '<path d="M6 6h11v8H5v-4M17 8v4M3 2v3M6 2v3M1.500 5h6v3l-2 2h-2l-2-2z" fill="none" stroke="#fff" stroke-width="1.300"/><rect x="8" y="8" width="7" height="4" fill="#fff"/>',
  '<path d="M2 15Q3 5 15 3M5 15q1-7 10-8.500M8.500 15q1-4 6.500-5" fill="none" stroke="#999" stroke-width="1.300"/><path d="M12 15q0-2 3-2.500V15z" fill="#fff"/>',
  '<path d="M1 7h3l4-4v12l-4-4H1z" fill="none" stroke="#fff" stroke-width="1.200"/><path d="M10 7q1.500 2 0 4M12.500 5q3 4 0 8M15 3q4 6 0 12" fill="none" stroke="#ddd"/>',
  '<path d="M4.500 1.500L9 4.500 4.500 7.500 0 4.500zM13.500 1.500l4.500 3-4.500 3L9 4.500zM4.500 7.500L9 10.500l-4.500 3L0 10.500zM13.500 7.500l4.500 3-4.500 3L9 10.500zM9 11.500l4 2.700L9 17l-4-2.800z" fill="#fff"/>',
  '<path d="M7 12L14 2q3-2 2 2L9 14l-3 1zM6 9q-5 1-5 5t5 2M11 8q5-1 5 1t-3 2" fill="none" stroke="#eee" stroke-width="1.200"/>'
]
</script>

<style>
html,
body,
#app {
  height: 100%;
}

body {
  margin: 0;
}
</style>

<style scoped>
.screen {
  display: flex;
  flex-direction: column;
  height: 100%;
  overflow: hidden;
  background: #f7ede6;
  color: #444;
  font-family: "Segoe UI", "Open Sans", "Noto Sans", sans-serif;
  font-size: 14px;
}

.screen *,
.screen {
  box-sizing: border-box;
}

button,
input {
  margin: 0;
  padding: 0;
  border: 0;
  background: none;
  color: inherit;
  font: inherit;
}

button {
  display: flex;
  align-items: center;
  justify-content: center;
}

input {
  min-width: 0;
  outline: none;
}

svg {
  display: block;
  flex: none;
}

.spacer {
  flex: 1;
}

/* Tabs */
.tab-strip {
  position: relative;
  display: flex;
  height: 32px;
  flex: none;
}

.tabs {
  display: flex;
  flex: 1;
  min-width: 0;
  padding-left: 8px;
  border-bottom: 1px solid #cdcce0;
}

.tab {
  position: relative;
  display: flex;
  align-items: center;
  flex: 1 1 0;
  min-width: 0;
  height: 31px;
  padding: 0 10px 0 11px;
  box-shadow: inset 0 -2px #d9efe8;
}

.tab:not(.active)::after {
  content: "";
  position: absolute;
  right: 0;
  top: 6px;
  height: 20px;
  border-right: 1px solid #7b9278;
}

.tab.active {
  height: 34px;
  padding-bottom: 3px;
  background: #f7ede6;
  box-shadow: inset 2px 0 #d3d2e4, inset -2px 0 #d3d2e4;
}

.favicon {
  width: 16px;
  height: 16px;
}

.tab-title {
  flex: 1;
  margin-left: 9px;
  overflow: hidden;
  white-space: nowrap;
  font-size: 12px;
  color: #444;
  mask-image: linear-gradient(to right, #000 65%, transparent);
}

.tab-close {
  width: 12px;
  height: 20px;
}

.share-handle {
  position: absolute;
  left: 61%;
  top: 0;
  width: 39px;
  height: 4px;
  border-top: 1px solid #5b4a45;
  border-bottom: 1px solid #5b4a45;
}

.window-controls {
  display: flex;
  align-items: center;
  width: 212px;
  padding: 0 17px 4px 12px;
  border-bottom: 1px solid #cdcce0;
}

.window-controls button + button {
  margin-left: 34px;
}

/* Address bar */
.toolbar {
  display: flex;
  align-items: center;
  flex: none;
  height: 39px;
  border-bottom: 1px solid #c9dcc9;
}

.nav-buttons {
  display: flex;
  gap: 26px;
  width: 144px;
  padding-left: 19px;
}

.address {
  display: flex;
  align-items: center;
  flex: 1;
  height: 30px;
  padding: 0 10px 0 15px;
  border-radius: 3px;
  background: #fff;
}

.url {
  flex: 1;
  height: 26px;
  margin-left: 15px;
  margin-right: 12px;
  font-size: 15px;
  color: #707070;
  background: linear-gradient(to right, #707070 51px, #111 51px, #111 254px, #707070 254px);
  background-clip: text;
  -webkit-text-fill-color: transparent;
}

.toolbar-actions {
  display: flex;
  align-items: center;
  justify-content: space-between;
  width: 192px;
  padding: 0 14px 0 19px;
}

/* Excel header */
.app-header {
  display: flex;
  align-items: center;
  flex: none;
  height: 60px;
  padding-top: 4px;
  background: #12743b;
  color: #fff;
  font-size: 16px;
}

.waffle {
  display: grid;
  grid-template-columns: repeat(3, 5px);
  gap: 3px;
  margin-left: 21px;
}

.waffle i {
  height: 5px;
  background: #fff;
}

.app-name {
  width: 67px;
  margin-left: 41px;
  padding-bottom: 2px;
  border-right: 1px solid #4c9a6b;
  font-size: 19px;
}

.document {
  position: relative;
  display: flex;
  justify-content: flex-end;
  flex: 1;
  max-width: 889px;
}

.ribbon-toggle {
  display: flex;
  align-items: center;
  gap: 14px;
  margin-left: auto;
  padding-right: 24px;
  border-right: 1px solid #4c9a6b;
  font-size: 17px;
}

.ribbon-toggle input {
  display: flex;
  align-items: center;
  width: 48px;
  height: 22px;
  border: 2px solid #d6e8dc;
  border-radius: 11px;
  appearance: none;
}

.ribbon-toggle input::before {
  content: "";
  width: 13px;
  height: 13px;
  margin-left: 3px;
  border-radius: 50%;
  background: #fff;
}

.user {
  margin-left: 26px;
  margin-right: 25px;
}

/* Striped cover shapes laid over the page */
.cover {
  position: absolute;
  border: 2px solid #c6c5d2;
  background: linear-gradient(
    #73e30f 12%, #63bd09 12%, #63bd09 20%, #529c10 20%, #529c10 28%, #4a7b18 28%, #4a7b18 40%,
    #396b10 40%, #396b10 60%, #4a7b18 60%, #4a7b18 72%, #529c10 72%, #529c10 80%, #63bd09 80%, #63bd09 88%, #73e30f 88%
  );
  box-shadow: 3px 4px 3px rgba(0, 0, 0, 0.75);
}

.cover-title {
  left: 18px;
  right: 31px;
  top: -16px;
  height: 49px;
  border-radius: 10% / 14%;
}

.cover-sheet {
  left: 1px;
  top: 117px;
  bottom: -23px;
  width: 479px;
  border-radius: 10% / 13%;
}

/* Ribbon tabs */
.menu {
  display: flex;
  align-items: stretch;
  flex: none;
  height: 38px;
  padding-left: 8px;
  padding-right: 12px;
  font-size: 17px;
}

.menu button {
  margin: 0 3px;
  padding: 0 14px;
  white-space: nowrap;
}

.menu .file {
  margin-right: 15px;
}

.menu .active {
  background: #fff;
  color: #12743b;
}

.menu .tell-me {
  width: 226px;
  margin: 0 12px 0 43px;
}

.tell-me::placeholder {
  color: #666;
}

.menu .outlined {
  gap: 5px;
  height: 30px;
  margin: 4px 0 0 13px;
  padding: 0 10px;
  border: 1px solid #e8d8e4;
  border-radius: 2px;
  background: #fff;
  color: #12743b;
  font-size: 16px;
  font-weight: 600;
}

/* Ribbon */
.ribbon {
  display: flex;
  flex: none;
  height: 135px;
  border-bottom: 1px solid #d5efe5;
  background: #fff;
}

.group {
  position: relative;
  display: flex;
  flex-direction: column;
  flex: none;
}

.group::after {
  content: "";
  position: absolute;
  right: 0;
  top: 10px;
  height: 118px;
  border-right: 1px solid #d5efe5;
}

.group-body {
  display: flex;
  flex: 1;
}

.group-name {
  height: 24px;
  line-height: 26px;
  text-align: center;
  font-size: 12px;
  color: #666;
}

.connections {
  width: 225px;
  padding: 0 6px;
}

.data-types {
  width: 216px;
}

.sort-filter {
  width: 389px;
}

.data-tools {
  width: 299px;
  padding: 0 7px;
}

.outline {
  width: 145px;
  padding: 0 7px;
}

.automation {
  width: 94px;
}

.big {
  flex-direction: column;
  justify-content: flex-start;
  padding-top: 12px;
  line-height: 18px;
  white-space: nowrap;
}

.automation .big {
  flex: 1;
}

.big .ico {
  height: 40px;
  margin-bottom: 6px;
}

.w-selected {
  width: 120px;
}

.w-all {
  width: 91px;
}

.w-custom {
  width: 73px;
}

.w-filter {
  width: 73px;
}

.w-columns {
  width: 66px;
}

.w-flash {
  width: 64px;
}

.w-remove {
  width: 78px;
}

.w-valid {
  width: 76px;
}

.split {
  width: 66px;
  margin-right: -3px;
}

.split .ico {
  margin-bottom: 4px;
}

.split span {
  width: 52px;
  border-top: 1px solid #d5efe5;
  text-align: center;
}

.split + .split {
  margin-left: 3px;
}

.split + .split span {
  width: 62px;
}

.caret {
  margin-top: 8px;
}

.gallery {
  display: flex;
  align-items: center;
  flex: 1;
  height: 78px;
  margin: 11px 10px 0 9px;
  padding: 4px 2px 0 0;
  border: 1px solid #d5efe5;
}

.gallery button {
  flex: 1;
  flex-direction: column;
  gap: 7px;
}

.stack {
  display: flex;
  flex-direction: column;
  gap: 29px;
  padding: 19px 0 0 12px;
}

.stack button {
  justify-content: flex-start;
  gap: 4px;
  height: 22px;
  white-space: nowrap;
}

.w-sort {
  width: 146px;
}

.muted {
  padding-left: 1px;
  color: #b3aeb3;
}

.divider {
  height: 105px;
  margin-top: 5px;
  border-left: 1px solid #d5efe5;
}

.collapse {
  align-self: flex-end;
  margin: 0 13px 15px auto;
}

/* Formula bar */
.formula-bar {
  display: flex;
  flex: none;
  height: 41px;
  padding: 6px 6px 6px 5px;
  gap: 4px;
}

.formula-bar > * {
  border: 1px solid #d5efe5;
  background: #fff;
}

.name-box {
  display: flex;
  justify-content: space-between;
  width: 153px;
  padding: 0 4px 0 3px;
  font-size: 15px;
}

.name-box input {
  flex: 1;
}

.fx {
  width: 38px;
  font: italic 19px "Liberation Serif", serif;
  color: #222;
}

.formula {
  flex: 1;
}

/* Sheet */
.workspace {
  display: flex;
  flex: 1;
  min-height: 0;
}

.sheet {
  position: relative;
  display: flex;
  flex-direction: column;
  flex: 1;
  min-width: 0;
  padding-top: 4px;
}

.sheet-row {
  display: flex;
  flex: 1;
  min-height: 0;
}

.grid-view {
  flex: 1;
  min-width: 0;
  overflow: hidden;
}

.grid {
  width: 1433px;
  border-collapse: separate;
  border-spacing: 0;
  table-layout: fixed;
  background: #fff;
}

.c-head {
  width: 46px;
}

.c-ab {
  width: 94px;
}

.c-c {
  width: 160px;
}

.c-std {
  width: 80px;
}

.grid th {
  padding: 0;
  background: #f7ede6;
  font-size: 16px;
  font-weight: 400;
  color: #555;
}

.grid thead th {
  height: 24px;
  padding-bottom: 2px;
  border-right: 1px solid #d5efe5;
  border-bottom: 1px solid #bdbdbd;
  line-height: 20px;
}

.grid .corner svg {
  margin: 0 3px 0 auto;
}

.grid thead .selected {
  padding-bottom: 1px;
  border-bottom: 2px solid #12743b;
  background: #d8d6e8;
  font-weight: 700;
  color: #12743b;
}

.grid tbody th {
  border-right: 1px solid #bdbdbd;
  border-bottom: 1px solid #d5efe5;
}

.grid td {
  padding: 1px 3px 0 2px;
  border-right: 1px solid #cfcce4;
  border-bottom: 1px solid #cfcce4;
  line-height: 20px;
  font-size: 16px;
  color: #111;
  white-space: nowrap;
}

.grid a {
  color: #0f65c0;
  text-underline-offset: 3px;
}

.r-title,
.r-data {
  height: 25px;
}

.grid .r-title .inside {
  padding-right: 1px;
  border-color: #000;
  background: #000;
  color: #fff;
  font-size: 15px;
  font-weight: 700;
}

.title-cell {
  display: flex;
  align-items: center;
  justify-content: space-between;
}

.title-cell button {
  width: 21px;
  height: 21px;
  border: 1px solid #aaa8c0;
  background: #fff;
}

.r-data .inside {
  border-bottom-color: #000;
}

.r-data .inside:nth-child(4),
.r-tail .inside {
  border-right-color: #000;
}

.r-tail {
  height: 75px;
}

.r-mid {
  height: 50px;
}

.r-tall {
  height: 100px;
}

.grid .active {
  position: relative;
}

.grid .active::before {
  content: "";
  position: absolute;
  inset: -3px -2px -2px -3px;
  border: 2px solid #12743b;
}

.grid .active::after {
  content: "";
  position: absolute;
  right: -4px;
  bottom: -4px;
  width: 5px;
  height: 5px;
  border: 1px solid #fff;
  background: #12743b;
}

.v-scroll {
  display: flex;
  flex-direction: column;
  width: 20px;
  margin-top: 24px;
  background: #d5efe5;
}

.v-scroll button,
.h-scroll button {
  width: 20px;
  height: 20px;
  border: 1px solid #bdbdbd;
  background: #fff;
}

.v-thumb {
  height: 69px;
  border: 1px solid #bdbdbd;
  background: #fff;
}

.h-scroll {
  display: flex;
  height: 20px;
  margin-right: 20px;
  background: #d5efe5;
}

.sheet-tabs {
  height: 40px;
}

/* Flow pane */
.pane {
  display: flex;
  flex-direction: column;
  width: 437px;
  margin-left: 1px;
  background: #fff;
}

.pane-head {
  display: flex;
  align-items: center;
  justify-content: space-between;
  flex: none;
  height: 34px;
  padding: 0 14px 0 10px;
}

.pane-head h2 {
  margin: 0;
  font-size: 24px;
  font-weight: 300;
  line-height: 34px;
}

.pane-view {
  display: flex;
  flex: 1;
  min-height: 0;
}

.pane-content {
  flex: 1;
  min-width: 0;
  overflow: hidden;
  color: #333;
  font-size: 16px;
}

.commands {
  display: flex;
  align-items: center;
  height: 56px;
  padding-left: 34px;
  background: #f7ede6;
}

.install {
  gap: 14px;
  margin-left: 29px;
}

.install svg:last-child {
  margin-left: -4px;
}

.pane-search {
  display: flex;
  align-items: center;
  flex: 1;
  gap: 11px;
  margin-left: 25px;
}

.pane-search input {
  width: 120px;
}

.pane-search input::placeholder {
  color: #677;
}

.notice {
  display: flex;
  align-items: flex-start;
  height: 59px;
  padding: 9px 33px 0 34px;
  background: #f7ede6;
  font-size: 14px;
  line-height: 20px;
}

.notice p {
  width: 250px;
  margin: 0 auto 0 11px;
}

.notice button {
  margin-top: 3px;
}

.flows-title {
  margin: 21px 30px 0;
  font-size: 21px;
  font-weight: 600;
  line-height: 32px;
}

.flow-head {
  height: 96px;
  margin: 0 20px;
  padding: 55px 15px 0;
  border-bottom: 2px solid #f7ede6;
  font-weight: 600;
  line-height: 24px;
}

.flow-row {
  display: flex;
  align-items: center;
  height: 79px;
  margin: 0 20px;
  padding: 0 23px 0 15px;
  border-bottom: 1px solid #f0ebe6;
  font-size: 17px;
  white-space: nowrap;
}

.flow-row button:nth-child(2) {
  margin-left: auto;
  margin-right: 41px;
}

.templates-title {
  margin: 67px 20px 3px;
  font-size: 19px;
  font-weight: 600;
  line-height: 30px;
}

.template {
  height: 140px;
  margin: 0 20px;
  padding: 25px 26px;
  border: 2px solid #f7ede6;
  border-radius: 4px;
}

.template-icons {
  display: flex;
  gap: 10px;
}

.template-name {
  margin-top: 16px;
  font-weight: 600;
  line-height: 24px;
  white-space: nowrap;
}

.pane-scroll {
  display: flex;
  flex-direction: column;
  align-items: center;
  width: 16px;
  padding: 7px 0 3px;
  background: #f7ede6;
}

.pane-thumb {
  width: 13px;
  height: 98px;
  margin-top: 5px;
  background: #c0bfbf;
}

.pane-foot {
  display: flex;
  flex-direction: column;
  flex: none;
  height: 79px;
  padding: 9px 19px 0;
  font-size: 18px;
  line-height: 30px;
}

.pane-foot a {
  display: flex;
  align-items: center;
  gap: 2px;
  color: #0f6cf2;
  text-decoration: none;
}

.rail {
  width: 50px;
}

.rail button {
  margin: 32px 0 0 20px;
}

/* Status bar */
.status {
  display: flex;
  align-items: center;
  flex: none;
  height: 29px;
  padding: 4px 21px 0 18px;
  border-top: 1px solid #d5efe5;
  background: #fff;
  color: #555;
}

.status a {
  margin: 0 55px 0 53px;
  color: inherit;
  text-decoration: none;
}

.status button:last-child {
  margin-left: 10px;
}

.status button:nth-last-child(3) {
  margin-right: 12px;
}

/* Taskbar */
.taskbar {
  position: relative;
  display: flex;
  flex: none;
  height: 40px;
  background: #281a0d;
  color: #fff;
}

.start {
  width: 48px;
}

.task-search {
  display: flex;
  align-items: center;
  gap: 11px;
  width: 345px;
  padding-left: 12px;
  border: 1px solid #c0c0c0;
  background: #f7ede6;
  color: #222;
}

.task-search input::placeholder {
  color: #222;
}

.app {
  position: relative;
  width: 49px;
}

.app.current {
  background: #4b4a52;
}

.app.running::after {
  content: "";
  position: absolute;
  left: 4px;
  right: 4px;
  bottom: 0;
  height: 2px;
  background: #5cb3e9;
}

.app.current::after {
  left: 0;
  right: 0;
}

.tray {
  display: flex;
  align-items: center;
  gap: 7px;
}

.lang {
  width: 50px;
  text-align: center;
  line-height: 40px;
  font-size: 12px;
}

.clock {
  display: flex;
  flex-direction: column;
  justify-content: center;
  width: 54px;
  text-align: center;
  font-size: 12px;
  line-height: 18px;
}

.notifications {
  position: relative;
  align-items: flex-start;
  width: 53px;
  margin-right: 4px;
  padding: 12px 7px 0 0;
  border-right: 1px solid #7a716a;
}

.badge {
  position: absolute;
  left: 21px;
  top: 18px;
  width: 20px;
  border-radius: 9px;
  background: #3a3440;
  text-align: center;
  font-size: 12px;
  font-weight: 600;
  line-height: 18px;
}
</style>
